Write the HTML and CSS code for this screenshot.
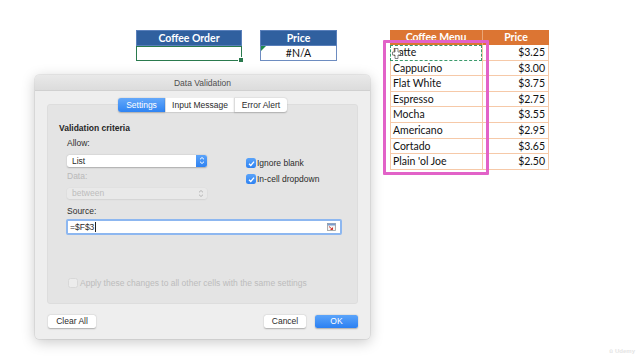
FILE: index.html
```html
<!DOCTYPE html>
<html>
<head>
<meta charset="utf-8">
<link rel="stylesheet" href="styles.css">
</head>
<body>
<div class="sheet">
  <div class="block order">
    <div class="hd">Coffee Order</div>
    <div class="cell sel"></div>
  </div>
  <div class="block price">
    <div class="hd">Price</div>
    <div class="cell err">#N/A</div>
  </div>
  <div class="menu">
    <div class="mh">Coffee Menu</div><div class="mh mh2">Price</div>
    <div class="mc ants">Latte</div><div class="mc p">$3.25</div>
    <div class="mc">Cappucino</div><div class="mc p">$3.00</div>
    <div class="mc">Flat White</div><div class="mc p">$3.75</div>
    <div class="mc">Espresso</div><div class="mc p">$2.75</div>
    <div class="mc">Mocha</div><div class="mc p">$3.55</div>
    <div class="mc">Americano</div><div class="mc p">$2.95</div>
    <div class="mc">Cortado</div><div class="mc p">$3.65</div>
    <div class="mc">Plain 'ol Joe</div><div class="mc p">$2.50</div>
    <div class="highlight"></div>
    <svg class="cursor" width="9" height="11" viewBox="0 0 9 11"><path d="M3 0.5h3v3.5h2.5v3H6v3.5H3V7H0.5V4H3z" fill="#fff" stroke="#777" stroke-width="0.9"/></svg>
  </div>
</div>

<div class="dialog">
  <div class="titlebar">Data Validation</div>
  <div class="dbody">
    <div class="panel">
      <div class="tabs">
        <div class="tab active t1">Settings</div>
        <div class="tab t2">Input Message</div>
        <div class="tab t3">Error Alert</div>
      </div>
      <div class="section-title">Validation criteria</div>
      <div class="criteria">
        <div class="leftcol">
          <div class="lbl">Allow:</div>
          <div class="select">
            <span>List</span>
            <span class="stepper"><svg width="6" height="9" viewBox="0 0 6 9"><path d="M1 3.3L3 1.5L5 3.3M1 5.7L3 7.5L5 5.7" fill="none" stroke="#fff" stroke-width="1"/></svg></span>
          </div>
          <div class="lbl dis">Data:</div>
          <div class="select disabled">
            <span>between</span>
            <svg class="chev" width="6" height="9" viewBox="0 0 6 9"><path d="M1 3.3L3 1.5L5 3.3M1 5.7L3 7.5L5 5.7" fill="none" stroke="#b5b5b5" stroke-width="1"/></svg>
          </div>
        </div>
        <div class="rightcol">
          <div class="check"><span class="box on"><svg width="9" height="9" viewBox="0 0 9 9"><path d="M2 4.7L3.8 6.5L7 2.6" fill="none" stroke="#fff" stroke-width="1.3"/></svg></span>Ignore blank</div>
          <div class="check"><span class="box on"><svg width="9" height="9" viewBox="0 0 9 9"><path d="M2 4.7L3.8 6.5L7 2.6" fill="none" stroke="#fff" stroke-width="1.3"/></svg></span>In-cell dropdown</div>
        </div>
      </div>
      <div class="lbl src">Source:</div>
      <div class="input">
        <span class="val">=$F$3<span class="caret"></span></span>
        <svg width="9" height="8" viewBox="0 0 9 8"><rect x="0.5" y="0.5" width="8" height="7" fill="#f4f4f4" stroke="#9a9a9a" stroke-width="0.8"/><rect x="0.5" y="0.5" width="8" height="2" fill="#7a9ccc"/><path d="M2 3.5L5.5 6.5M5.5 6.5V4.5M5.5 6.5H3.5" stroke="#d0342c" stroke-width="1" fill="none"/></svg>
      </div>
      <div class="check apply"><span class="box off"></span>Apply these changes to all other cells with the same settings</div>
    </div>
    <div class="buttons">
      <div class="btn">Clear All</div>
      <div class="spacer"></div>
      <div class="btn cancel">Cancel</div>
      <div class="btn ok">OK</div>
    </div>
  </div>
</div>

<div class="watermark"><span class="wm-u">ū</span>Udemy</div>
</body>
</html>
```

FILE: styles.css
```css
* { box-sizing: border-box; }

body {
  margin: 0;
  width: 640px;
  height: 360px;
  background: #ffffff;
  font-family: "Lato", "Liberation Sans", sans-serif;
  overflow: hidden;
  position: relative;
}

/* spreadsheet */
.sheet {
  display: flex;
  align-items: flex-start;
  padding: 30px 0 0 136px;
}

.block {
  display: flex;
  flex-direction: column;
}

.order { width: 106px; margin-right: 18px; }
.price { width: 77px; margin-right: 53px; }

.hd {
  height: 16px;
  line-height: 15px;
  text-align: center;
  color: #ffffff;
  font-weight: 700;
  font-size: 10.5px;
  background: #30609f;
  border: 1px solid #5a80bb;
}

.cell {
  height: 15px;
  font-size: 10.5px;
  line-height: 14px;
  text-align: center;
  color: #111;
  position: relative;
}

.cell.sel {
  border: 1.5px solid #2a7a4e;
  border-top-width: 1px;
}

.cell.sel::after {
  content: "";
  position: absolute;
  right: -3px;
  bottom: -3px;
  width: 4px;
  height: 4px;
  background: #2a7a4e;
  border: 1px solid #fff;
}

.cell.err {
  border: 1px solid #6d8cc0;
  border-top: none;
}

.cell.err::before {
  content: "";
  position: absolute;
  left: 0;
  top: 0;
  border-top: 5px solid #1f8a4c;
  border-right: 5px solid transparent;
}

.menu {
  position: relative;
  width: 159px;
  display: grid;
  grid-template-columns: 92px 67px;
  grid-template-rows: 15px repeat(8, 15.6px);
  font-size: 10.5px;
}

.mh {
  background: #dc7533;
  color: #ffffff;
  font-weight: 700;
  text-align: center;
  line-height: 15px;
}

.mh2 { border-left: 1px solid #eaa677; }

.mc {
  border-bottom: 1px solid #f6c9a8;
  border-left: 1px solid #f6c9a8;
  padding: 0 3px 0 2px;
  line-height: 15px;
  color: #111;
  white-space: nowrap;
}

.mc.p {
  text-align: right;
  border-right: 1px solid #f6c9a8;
}

.mc.ants {
  border: 1px dashed #3b9a6c;
  line-height: 13px;
}

.highlight {
  position: absolute;
  left: -7px;
  top: 10px;
  width: 106px;
  height: 135px;
  border: 3px solid #e262c8;
  border-radius: 1px;
}

.cursor {
  position: absolute;
  left: 2px;
  top: 18px;
}

/* dialog */
.dialog {
  position: absolute;
  left: 35px;
  top: 75px;
  width: 335px;
  height: 264px;
  background: #eeeeee;
  border-radius: 4px;
  box-shadow: 0 3px 14px rgba(0, 0, 0, 0.22), 0 0 0 0.5px rgba(0, 0, 0, 0.12);
  font-family: "Liberation Sans", "Noto Sans", sans-serif;
  font-size: 8.5px;
  color: #2b2b2b;
  overflow: hidden;
}

.titlebar {
  height: 16px;
  line-height: 17px;
  text-align: center;
  color: #4f4f4f;
  background: linear-gradient(#e9e9e9, #dcdcdc);
  border-bottom: 1px solid #d0d0d0;
}

.dbody {
  padding: 13px 12px 0 12px;
}

.panel {
  height: 200px;
  background: #e4e4e4;
  border: 1px solid #dddddd;
  border-radius: 3px;
  padding: 0 0 0 11px;
}

.tabs {
  display: flex;
  justify-content: center;
  margin: -7px 0 0 -11px;
  height: 14px;
}

.tab {
  height: 14px;
  line-height: 14px;
  text-align: center;
  background: #ffffff;
  color: #2b2b2b;
  box-shadow: 0 0.5px 1.5px rgba(0, 0, 0, 0.25);
}

.t1 { width: 47px; border-radius: 3px 0 0 3px; }
.t2 { width: 69px; border-left: 1px solid #dcdcdc; }
.t3 { width: 53px; border-left: 1px solid #dcdcdc; border-radius: 0 3px 3px 0; }

.tab.active {
  background: linear-gradient(#64a8fa, #2f84f3);
  color: #ffffff;
}

.section-title {
  font-weight: 700;
  margin-top: 11px;
  height: 11px;
  line-height: 11px;
  color: #262626;
}

.criteria {
  display: flex;
  margin: 4px 0 0 8px;
}

.leftcol {
  width: 140px;
  display: flex;
  flex-direction: column;
}

.lbl {
  height: 11px;
  line-height: 11px;
  color: #2e2e2e;
}

.lbl.dis { color: #b9b9b9; margin-top: 4.5px; }

.select {
  margin-top: 5.5px;
  height: 12px;
  background: #ffffff;
  border-radius: 2.5px;
  box-shadow: 0 0.5px 1.5px rgba(0, 0, 0, 0.25);
  display: flex;
  align-items: center;
  justify-content: space-between;
  padding-left: 5px;
  line-height: 12px;
}

.stepper {
  width: 11px;
  height: 12px;
  background: linear-gradient(#5ba3f9, #2e82f2);
  border-radius: 0 2.5px 2.5px 0;
  display: flex;
  align-items: center;
  justify-content: center;
}

.select.disabled {
  background: #e9e9e9;
  color: #bdbdbd;
  box-shadow: 0 0.5px 1.5px rgba(0, 0, 0, 0.12);
  padding-right: 3px;
  height: 11px;
}

.rightcol {
  margin: 19.5px 0 0 39px;
  display: flex;
  flex-direction: column;
  gap: 5px;
}

.check {
  display: flex;
  align-items: center;
  height: 11px;
  line-height: 11px;
  white-space: nowrap;
}

.box {
  width: 10px;
  height: 10px;
  border-radius: 2.5px;
  margin-right: 1px;
  display: flex;
  align-items: center;
  justify-content: center;
}

.box.on {
  background: linear-gradient(#5aa3f9, #2f83f2);
}

.box.off {
  background: #ececec;
  border: 0.5px solid #d8d8d8;
  margin-right: 2px;
}

.lbl.src {
  margin: 7.5px 0 0 8px;
}

.input {
  margin: 1.5px 0 0 7px;
  width: 276px;
  height: 16px;
  background: #ffffff;
  border: 2px solid #8db7f0;
  border-radius: 2px;
  display: flex;
  align-items: center;
  justify-content: space-between;
  padding: 0 4px 0 2px;
}

.val {
  display: flex;
  align-items: center;
  color: #2b2b2b;
}

.caret {
  display: inline-block;
  width: 1px;
  height: 10px;
  background: #222;
  margin-left: 0.5px;
}

.check.apply {
  margin: 43px 0 0 9px;
  color: #bcbcbc;
}

.buttons {
  display: flex;
  margin-top: 11px;
  padding-left: 1px;
}

.spacer { flex: 1; }

.btn {
  height: 13px;
  line-height: 13px;
  text-align: center;
  background: #ffffff;
  border-radius: 2.5px;
  box-shadow: 0 0.5px 1.5px rgba(0, 0, 0, 0.28);
  color: #2b2b2b;
  width: 48px;
}

.btn.cancel { width: 42px; }

.btn.ok {
  width: 43px;
  margin-left: 9px;
  background: linear-gradient(#5ba4fa, #2b80f2);
  color: #ffffff;
}

.watermark {
  position: absolute;
  right: 5px;
  bottom: 6px;
  font-family: "Liberation Sans", sans-serif;
  font-size: 6px;
  font-weight: 700;
  color: #e4e4e4;
}

.wm-u { margin-right: 2px; }
```
